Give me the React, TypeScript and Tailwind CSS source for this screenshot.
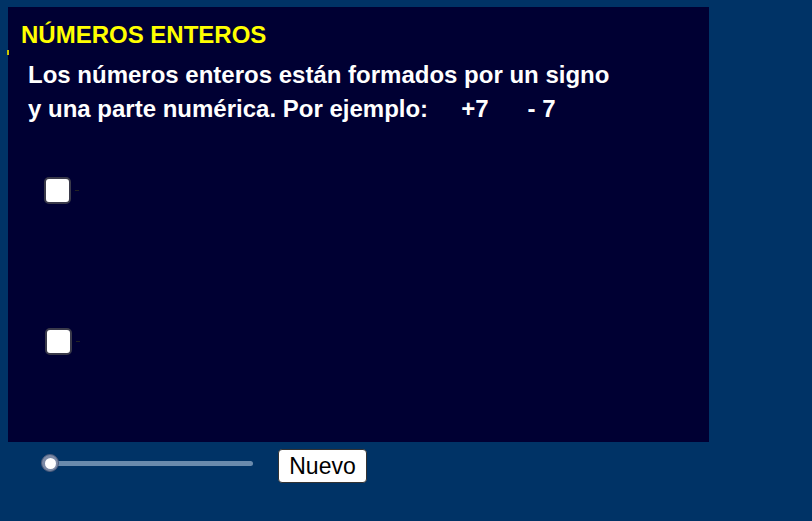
import React from "react";

export default function App() {
  const font = { fontFamily: '"Liberation Sans", Arial, sans-serif' };
  return (
    <div
      className="w-[812px] h-[521px] bg-[#003366] overflow-hidden relative"
      style={font}
    >
      <div className="ml-[8px] mt-[7px] w-[701px] h-[435px] bg-[#000033] relative pt-[14px]">
        <span className="absolute left-[-1px] top-[43px] w-[2px] h-[5px] bg-[#c8c800]" />
        <div className="pl-[13px] text-[24px] leading-[28px] font-bold text-[#ffff00]">
          NÚMEROS ENTEROS
        </div>
        <div className="pl-[20px] mt-[9px] text-[24px] leading-[34px] font-bold text-white">
          <div>Los números enteros están formados por un signo</div>
          <div className="flex">
            <span>y una parte numérica. Por ejemplo:</span>
            <span className="ml-[33px]">+7</span>
            <span className="ml-[39px]">- 7</span>
          </div>
        </div>
        <div className="pl-[36px] mt-[51px] flex items-center gap-[4px]">
          <div className="w-[27px] h-[27px] bg-white rounded-[5px] border-[2px] border-[#3a3a4a]" />
          <div className="w-[4px] h-[1px] bg-[#222]" />
        </div>
        <div className="pl-[37px] mt-[124px] flex items-center gap-[4px]">
          <div className="w-[27px] h-[27px] bg-white rounded-[5px] border-[2px] border-[#3a3a4a]" />
          <div className="w-[4px] h-[1px] bg-[#222]" />
        </div>
      </div>
      <div className="flex items-start pl-[41px] mt-[7px]">
        <div className="relative w-[212px] h-[20px] mt-[4px]">
          <div className="absolute left-[8px] right-0 top-[8px] h-[5px] rounded-full bg-[#6a8bad]" />
          <div className="absolute left-0 top-[1px] w-[18px] h-[18px] rounded-full bg-[#7c8aa6] border border-[#4a5a7a] flex items-center justify-center">
            <div className="w-[11px] h-[11px] rounded-full bg-white" />
          </div>
        </div>
        <button className="ml-[25px] w-[89px] h-[34px] bg-white rounded-[4px] border border-[#333] text-black text-[23px] leading-none flex items-center justify-center">
          Nuevo
        </button>
      </div>
    </div>
  );
}
